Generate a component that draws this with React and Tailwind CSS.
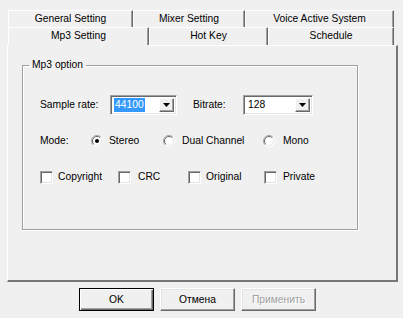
import React from "react";

const raisedTab =
  "flex items-center justify-center border-l border-t border-white border-r border-r-[#696969] shadow-[inset_-1px_0_0_#a0a0a0]";

function Tab({ w, label }) {
  return (
    <div className={`${raisedTab} ${w}`}>
      <span className="leading-none">{label}</span>
    </div>
  );
}

function Combo({ w, value, selected }) {
  return (
    <div
      className={`flex h-[20px] ${w} bg-white border border-[#a0a0a0] border-r-white border-b-white shadow-[inset_1px_1px_0_#696969,inset_-1px_-1px_0_#e3e3e3] p-[2px]`}
    >
      <div className="flex-1 flex items-center pl-[1px]">
        <span
          className={`leading-[14px] px-[1px] ${
            selected ? "bg-[#3399ff] text-white" : ""
          }`}
        >
          {value}
        </span>
      </div>
      <div className="w-[15px] h-full bg-[#f0f0f0] border border-white border-r-[#696969] border-b-[#696969] shadow-[inset_-1px_-1px_0_#a0a0a0] flex items-center justify-center">
        <svg width="7" height="4" viewBox="0 0 7 4">
          <path d="M0 0H7L3.5 4Z" fill="#000" />
        </svg>
      </div>
    </div>
  );
}

function Radio({ checked }) {
  return (
    <svg width="12" height="12" viewBox="0 0 12 12" className="shrink-0">
      <circle cx="6" cy="6" r="5.5" fill="#fff" />
      <path d="M2.1 9.9A5.5 5.5 0 0 1 9.9 2.1" stroke="#a0a0a0" fill="none" />
      <path d="M2.8 9.2A4.5 4.5 0 0 1 9.2 2.8" stroke="#696969" fill="none" />
      <path d="M9.9 2.1A5.5 5.5 0 0 1 2.1 9.9" stroke="#fff" fill="none" />
      <path d="M9.2 2.8A4.5 4.5 0 0 1 2.8 9.2" stroke="#e3e3e3" fill="none" />
      {checked && <circle cx="6" cy="6" r="2" fill="#000" />}
    </svg>
  );
}

function Check() {
  return (
    <div className="w-[13px] h-[13px] shrink-0 bg-white border border-[#a0a0a0] border-r-white border-b-white shadow-[inset_1px_1px_0_#696969,inset_-1px_-1px_0_#e3e3e3]" />
  );
}

function Button({ children, def, disabled }) {
  return (
    <div
      className={`w-[75px] h-[23px] flex items-center justify-center bg-[#f0f0f0] ${
        def
          ? "border border-[#000] shadow-[inset_1px_1px_0_#fff,inset_-1px_-1px_0_#696969,inset_-2px_-2px_0_#a0a0a0]"
          : "border border-white border-r-[#696969] border-b-[#696969] shadow-[inset_-1px_-1px_0_#a0a0a0,inset_1px_1px_0_#e3e3e3]"
      }`}
    >
      <span
        className={
          disabled
            ? "text-[#a0a0a0] [text-shadow:1px_1px_0_#fff]"
            : "text-black"
        }
      >
        {children}
      </span>
    </div>
  );
}

export default function App() {
  return (
    <div className="w-[403px] h-[318px] bg-[#f0f0f0] text-black overflow-hidden font-['Liberation_Sans',Arial,sans-serif] text-[10.3px]">
      <div className="pt-[10px] pl-[8px]">
        <div className="flex h-[17px]">
          <Tab w="w-[125px]" label="General Setting" />
          <Tab w="w-[112px]" label="Mixer Setting" />
          <Tab w="w-[149px]" label="Voice Active System" />
        </div>
        <div className="flex h-[18px]">
          <Tab w="w-[141px]" label="Mp3 Setting" />
          <Tab w="w-[119px]" label="Hot Key" />
          <Tab w="w-[126px]" label="Schedule" />
        </div>
      </div>
      <div className="ml-[7px] w-[391px] h-[237px] border-l border-t border-white border-r-2 border-b-2 border-r-[#777] border-b-[#777] flex flex-col">
        <div className="h-0 relative">
          <div className="absolute left-0 top-[-1px] w-[141px] h-[1px] bg-[#f0f0f0]" />
        </div>
        <fieldset className="ml-[14px] mt-[13px] w-[336px] h-[171px] border border-[#a0a0a0] shadow-[1px_1px_0_#fff,inset_1px_1px_0_#fff] p-0">
          <legend className="ml-[6px] px-[3px] leading-[12px]">Mp3 option</legend>
          <div className="pl-[17px] pt-[24px] flex flex-col">
            <div className="flex items-center h-[20px]">
              <span className="w-[70px]">Sample rate:</span>
              <Combo w="w-[67px]" value="44100" selected />
              <span className="ml-[16px] w-[50px]">Bitrate:</span>
              <Combo w="w-[70px]" value="128" />
            </div>
            <div className="flex items-center h-[14px] mt-[19px]">
              <span className="w-[51px]">Mode:</span>
              <div className="w-[72px] flex items-center gap-[6px]">
                <Radio checked />
                <span>Stereo</span>
              </div>
              <div className="w-[100px] flex items-center gap-[7px]">
                <Radio />
                <span>Dual Channel</span>
              </div>
              <div className="flex items-center gap-[8px]">
                <Radio />
                <span>Mono</span>
              </div>
            </div>
            <div className="flex items-center h-[14px] mt-[22px]">
              <div className="w-[78px] flex items-center gap-[5px]">
                <Check />
                <span>Copyright</span>
              </div>
              <div className="w-[70px] flex items-center gap-[7px]">
                <Check />
                <span>CRC</span>
              </div>
              <div className="w-[76px] flex items-center gap-[5px]">
                <Check />
                <span>Original</span>
              </div>
              <div className="flex items-center gap-[6px]">
                <Check />
                <span>Private</span>
              </div>
            </div>
          </div>
        </fieldset>
      </div>
      <div className="flex gap-[6px] pl-[79px] pt-[6px]">
        <Button def>OK</Button>
        <Button>Отмена</Button>
        <Button disabled>Применить</Button>
      </div>
    </div>
  );
}
